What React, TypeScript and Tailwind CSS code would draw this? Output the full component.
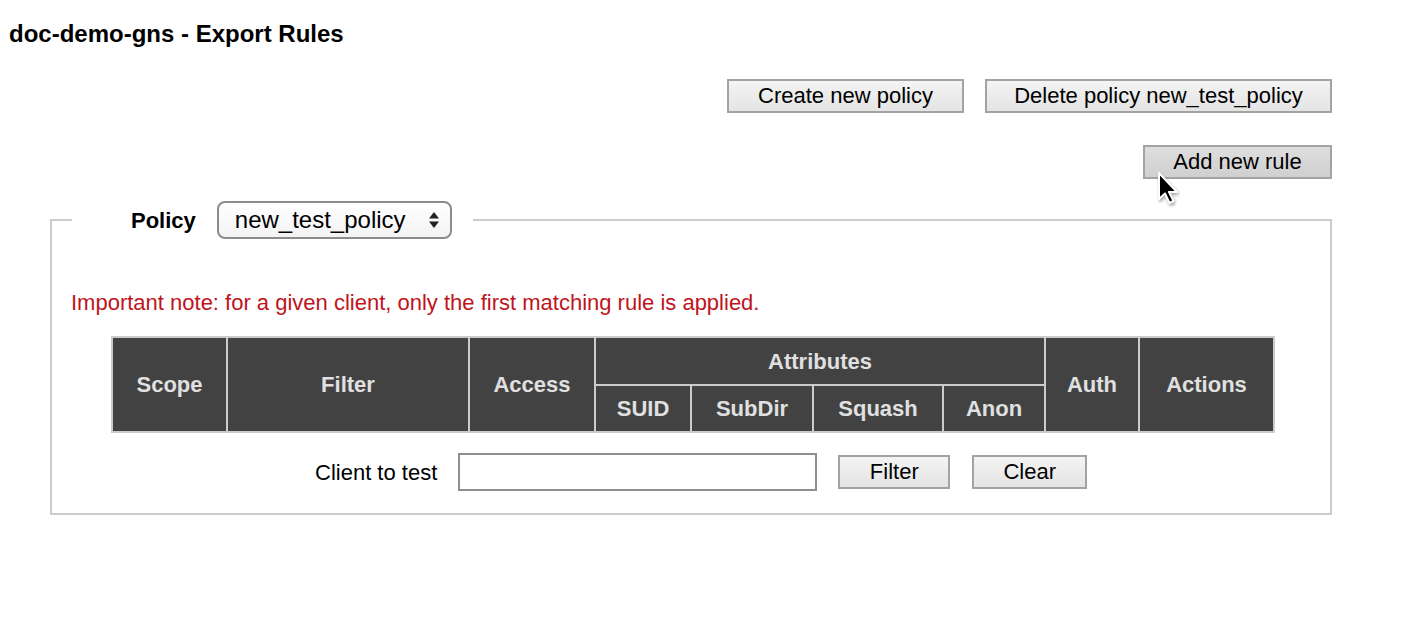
import React from "react";

const btn =
  "h-[34px] border-2 border-[#a3a3a3] bg-gradient-to-b from-[#f4f4f4] to-[#e4e4e4] text-[22px] leading-none text-black";

export default function App() {
  const cols = [115, 242, 126, 96, 122, 130, 102, 94, 135];
  const th = "border-2 border-[#cbcbcb] bg-[#424242] text-[#e0e0e0] font-bold text-[22px] text-center align-middle p-0";

  return (
    <div className="relative min-h-[640px] w-[1410px] bg-white font-['Liberation_Sans',Arial,sans-serif] text-black">
      <h1 className="pl-[9px] pt-[20px] text-[24px] font-bold leading-[28px]">doc-demo-gns - Export Rules</h1>

      {/* top buttons */}
      <div className="mt-[31px] flex justify-end gap-[21px] pr-[78px]">
        <button className={`${btn} w-[237px]`}>Create new policy</button>
        <button className={`${btn} w-[347px]`}>Delete policy new_test_policy</button>
      </div>
      <div className="mt-[32px] flex justify-end pr-[78px]">
        <button className="h-[34px] w-[189px] border-2 border-[#a3a3a3] bg-gradient-to-b from-[#dedede] to-[#d0d0d0] text-[22px] leading-none text-black">
          Add new rule
        </button>
      </div>

      <fieldset className="ml-[50px] mt-[22px] w-[1282px] border-2 border-[#cccccc] px-[19px] pb-[22px]">
        <legend className="ml-[1px] flex items-center pl-[59px] pr-[21px]">
          <span className="text-[22px] font-bold">Policy</span>
          <div className="ml-[21px] flex h-[38px] w-[235px] items-center justify-between rounded-[8px] border-2 border-[#8c8c8c] bg-gradient-to-b from-white to-[#f3f3f3] pl-[16px] pr-[10px]">
            <span className="text-[24px] leading-none">new_test_policy</span>
            <svg width="12" height="20" viewBox="0 0 12 20">
              <path d="M6 2 L11 8.5 L1 8.5 Z" fill="#222" />
              <path d="M6 18 L11 11.5 L1 11.5 Z" fill="#222" />
            </svg>
          </div>
        </legend>

        <p className="mt-[51px] text-[22px] leading-[26px] text-[#c0141c]">
          Important note: for a given client, only the first matching rule is applied.
        </p>

        <table className="ml-[40px] mt-[20px] table-fixed border-collapse" style={{ width: 1164 }}>
          <colgroup>
            {cols.map((w, i) => (
              <col key={i} style={{ width: w }} />
            ))}
          </colgroup>
          <thead>
            <tr className="h-[48px]">
              <th rowSpan={2} className={th}>Scope</th>
              <th rowSpan={2} className={th}>Filter</th>
              <th rowSpan={2} className={th}>Access</th>
              <th colSpan={4} className={th}>Attributes</th>
              <th rowSpan={2} className={th}>Auth</th>
              <th rowSpan={2} className={th}>Actions</th>
            </tr>
            <tr className="h-[47px]">
              <th className={th}>SUID</th>
              <th className={th}>SubDir</th>
              <th className={th}>Squash</th>
              <th className={th}>Anon</th>
            </tr>
          </thead>
        </table>

        <div className="mt-[20px] flex items-center pl-[244px]">
          <span className="text-[22px]">Client to test</span>
          <input className="ml-[21px] h-[38px] w-[359px] border-2 border-[#8f8f8f] bg-white outline-none" />
          <button className={`${btn} ml-[21px] w-[112px]`}>Filter</button>
          <button className={`${btn} ml-[22px] w-[115px]`}>Clear</button>
        </div>
      </fieldset>

      {/* mouse pointer */}
      <svg
        className="absolute left-[1154px] top-[168px]"
        width="26"
        height="40"
        viewBox="0 0 26 40"
      >
        <path
          d="M5 5 L5 31 L11 25.5 L15.5 35 L19.5 33 L15 24 L23 24 Z"
          fill="#000"
          stroke="#fff"
          strokeWidth="2"
          strokeLinejoin="round"
          style={{ filter: "drop-shadow(1px 2px 1.5px rgba(0,0,0,0.35))" }}
        />
      </svg>
    </div>
  );
}
